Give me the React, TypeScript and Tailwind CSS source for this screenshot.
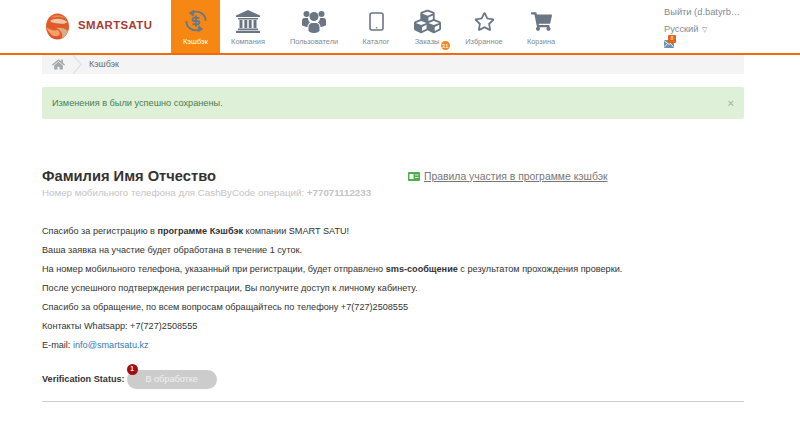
import { FaCubes, FaHome, FaRegStar, FaShoppingCart } from "react-icons/fa";
import type { ReactNode } from "react";

const FONT = { fontFamily: '"Liberation Sans", Arial, sans-serif' };

function Logo() {
  return (
    <svg width="25" height="27" viewBox="0 0 25 27">
      <ellipse cx="12.5" cy="13.5" rx="11.5" ry="13" fill="#e2592a" />
      <path d="M6 4.5C10 1 17 1.5 21 5.5 16 3.5 10 4 6 4.5z" fill="#f08a4a" />
      <path d="M5 8C9 5 17 5 22.5 9 20 11 17 11 14 10.5 10 10 7 10 5 8z" fill="#e9c9a6" />
      <path d="M11 15c4-1 9 0 12 3-1 3-3 6-6 7 1-4-1-8-6-10z" fill="#d9ad82" />
      <path d="M1.5 14c3 3 8 4 11 3 3 2 3 5 0 6-5 1-9-3-11-9z" fill="#f4a26a" />
      <path d="M3 21c4 4 9 5 13 3-3 3-10 2-13-3z" fill="#c9492a" />
    </svg>
  );
}

function CashIcon() {
  return (
    <svg width="22" height="22" viewBox="0 0 24 24" fill="none" stroke="#66788a">
      <path d="M22.5 12A10 10 0 0 0 8 3" strokeWidth="2" />
      <path d="M1.5 12A10 10 0 0 0 16 21" strokeWidth="2" />
      <path d="M9.5 0L4.5 3.3 9.5 7.2z" fill="#66788a" strokeWidth="0.5" />
      <path d="M14.5 16.8L19.5 20.7 14.5 24z" fill="#66788a" strokeWidth="0.5" />
      <path d="M15.8 8.6H10a1.6 1.6 0 0 0 0 3.4h4a1.6 1.6 0 0 1 0 3.4H8.2M12 6v12" strokeWidth="2.1" />
    </svg>
  );
}

function BankIcon() {
  return (
    <svg width="24" height="23" viewBox="0 0 24 23" fill="#6a7683">
      <path d="M12 0L24 5.5V7H0V5.5z" />
      <rect x="2" y="8" width="20" height="1.5" />
      <rect x="3.5" y="10" width="3" height="8" />
      <rect x="8.3" y="10" width="3" height="8" />
      <rect x="12.7" y="10" width="3" height="8" />
      <rect x="17.5" y="10" width="3" height="8" />
      <rect x="2" y="18.5" width="20" height="1.7" />
      <rect x="0" y="20.8" width="24" height="2.2" />
    </svg>
  );
}

function UsersIcon() {
  return (
    <svg width="24" height="23" viewBox="0 0 24 23" fill="#6a7683">
      <circle cx="4.5" cy="4" r="3" />
      <circle cx="19.5" cy="4" r="3" />
      <circle cx="12" cy="6.5" r="4.5" />
      <path d="M0 15v-4.500C0 8.500 1.500 8 3 8h3c.2 2 1 3.500 2 4.500-1.500 1-2.500 2.500-2.500 4.500C3 16.700 1 16 0 15z" />
      <path d="M24 15v-4.500C24 8.500 22.500 8 21 8h-3c-.2 2-1 3.500-2 4.500 1.500 1 2.500 2.500 2.500 4.500C21 16.700 23 16 24 15z" />
      <path d="M6.500 17c0-2.500 2-4 3.500-4h4c1.500 0 3.500 1.500 3.500 4v4c-3 2.700-8 2.700-11 0z" />
    </svg>
  );
}

function TabletIcon() {
  return (
    <svg width="15" height="19" viewBox="0 0 15 19" fill="none">
      <rect x="1" y="1" width="13" height="17" rx="2" stroke="#6a7683" strokeWidth="1.6" />
      <circle cx="7.5" cy="15.7" r="0.8" fill="#6a7683" />
    </svg>
  );
}

function IdIcon() {
  return (
    <svg width="12" height="9" viewBox="0 0 12 9" className="mr-[4px]">
      <rect width="12" height="9" rx="1" fill="#4cae4c" />
      <rect x="1.500" y="2" width="4" height="5" fill="#ffffff" />
      <rect x="7" y="2.500" width="3.500" height="1" fill="#d8f0d8" />
      <rect x="7" y="5" width="3.500" height="1" fill="#d8f0d8" />
    </svg>
  );
}

function MailIcon() {
  return (
    <svg width="10" height="8" viewBox="0 0 10 8">
      <rect width="10" height="8" fill="#6f93ad" />
      <path d="M0 .5L5 4.500 10 .5M0 7.500L3.500 3.500M10 7.500L6.500 3.500" stroke="#ffffff" strokeWidth="0.8" fill="none" />
    </svg>
  );
}

function NavItem({ label, width, icon, active, badge }: { label: string; width: string; icon: ReactNode; active?: boolean; badge?: boolean }) {
  return (
    <div className={`${width} ${active ? "bg-[#f68712] text-white" : "text-[#808a94]"} flex flex-col items-center pt-[9px]`}>
      <div className="flex h-[24px] items-center justify-center">{icon}</div>
      <div className="relative mt-[4px] whitespace-nowrap text-[7.400px] leading-[10px]">
        {label}
        {badge && (
          <span className="absolute left-[26px] top-[4px] flex h-[9px] w-[9px] items-center justify-center rounded-full bg-[#f6871f] text-[6px] leading-none text-white">
            31
          </span>
        )}
      </div>
    </div>
  );
}

export default function App() {
  return (
    <div className="h-[421px] w-[800px] overflow-hidden bg-white" style={FONT}>
      <header className="flex h-[55px] border-b-2 border-[#f26a0f]">
        <div className="flex w-[171px] items-center pb-[1px] pl-[45px]">
          <Logo />
          <span className="ml-[8px] text-[11.400px] font-bold tracking-[0.4px] text-[#a83b34]">SMARTSATU</span>
        </div>
        <NavItem label="Кэшбэк" width="w-[49px]" active icon={<CashIcon />} />
        <NavItem label="Компания" width="w-[56px]" icon={<BankIcon />} />
        <NavItem label="Пользователи" width="w-[76px]" icon={<UsersIcon />} />
        <NavItem label="Каталог" width="w-[48px]" icon={<TabletIcon />} />
        <NavItem label="Заказы" width="w-[54px]" badge icon={<FaCubes size={27} color="#6a7683" />} />
        <NavItem label="Избранное" width="w-[60px]" icon={<FaRegStar size={21} color="#6a7683" />} />
        <NavItem label="Корзина" width="w-[54px]" icon={<FaShoppingCart size={21} color="#6a7683" />} />
        <div className="ml-[96px] pt-[6px] text-[9.300px] text-[#808a94]">
          <div className="leading-[12px]">Выйти (d.batyrb…</div>
          <div className="mt-[5px] flex items-center leading-[12px]">
            Русский <span className="ml-[3px] text-[7px] leading-none">▽</span>
          </div>
          <div className="relative mt-[5px] w-[10px]">
            <MailIcon />
            <span className="absolute left-[4px] top-[-5px] flex h-[8px] w-[8px] items-center justify-center rounded-[1px] bg-[#e8650f] text-[4.500px] leading-none text-white">
              8
            </span>
          </div>
        </div>
      </header>

      <main className="mx-[42px] w-[702px]">
        <nav className="flex h-[19px] items-center bg-[#f4f4f4] text-[8.800px] text-[#5f6b76]">
          <div className="flex w-[31px] justify-center pl-[1px]">
            <FaHome size={13} color="#a4a9ae" />
          </div>
          <svg width="10" height="19" viewBox="0 0 10 19" fill="none">
            <path d="M0 0l8 9.500L0 19" stroke="#dfe4ea" strokeWidth="1.500" />
          </svg>
          <span className="ml-[6px]">Кэшбэк</span>
        </nav>

        <div className="mt-[13px] flex h-[32px] items-center justify-between rounded-[2px] bg-[#dff0d8] pl-[10px] pr-[10px] pt-[1px] text-[9.200px] text-[#4b7d4f]">
          <span>Изменения в были успешно сохранены.</span>
          <span className="text-[11px] font-bold leading-none text-[#b3bfb0]">×</span>
        </div>

        <div className="mt-[48px] flex">
          <div className="w-[366px]">
            <h1 className="text-[14.700px] font-bold leading-[18px] text-[#333333]">Фамилия Имя Отчество</h1>
            <p className="mt-[1px] text-[9.750px] leading-[13px] text-[#c4c4c4]">
              Номер мобильного телефона для CashByCode операций: <b>+77071112233</b>
            </p>
          </div>
          <div className="flex h-[18px] items-center pt-[1px] text-[10.400px] text-[#777777] underline">
            <IdIcon />
            Правила участия в программе кэшбэк
          </div>
        </div>

        <div className="mt-[23px] text-[9.150px] leading-[19px] text-[#333333]">
          <p>
            Спасибо за регистрацию в <b>программе Кэшбэк</b> компании SMART SATU!
          </p>
          <p>Ваша заявка на участие будет обработана в течение 1 суток.</p>
          <p>
            На номер мобильного телефона, указанный при регистрации, будет отправлено <b>sms-сообщение</b> с результатом прохождения проверки.
          </p>
          <p>После успешного подтверждения регистрации, Вы получите доступ к личному кабинету.</p>
          <p>Спасибо за обращение, по всем вопросам обращайтесь по телефону +7(727)2508555</p>
          <p>Контакты Whatsapp: +7(727)2508555</p>
          <p>
            E-mail: <span className="text-[#337ab7]">info@smartsatu.kz</span>
          </p>
        </div>

        <div className="mt-[15px] flex items-center text-[9.150px]">
          <b className="text-[#333333]">Verification Status:</b>
          <div className="relative ml-[2px] flex h-[19px] w-[90px] items-center justify-center rounded-full bg-[#cccccc] text-[#f0f0f0]">
            В обработке
            <span className="absolute left-[0px] top-[-6px] flex h-[11px] w-[11px] items-center justify-center rounded-full bg-[#a50d12] text-[6.500px] font-bold leading-none text-white">
              1
            </span>
          </div>
        </div>

        <div className="mt-[12px] border-t border-[#cccccc]" />
      </main>
    </div>
  );
}
